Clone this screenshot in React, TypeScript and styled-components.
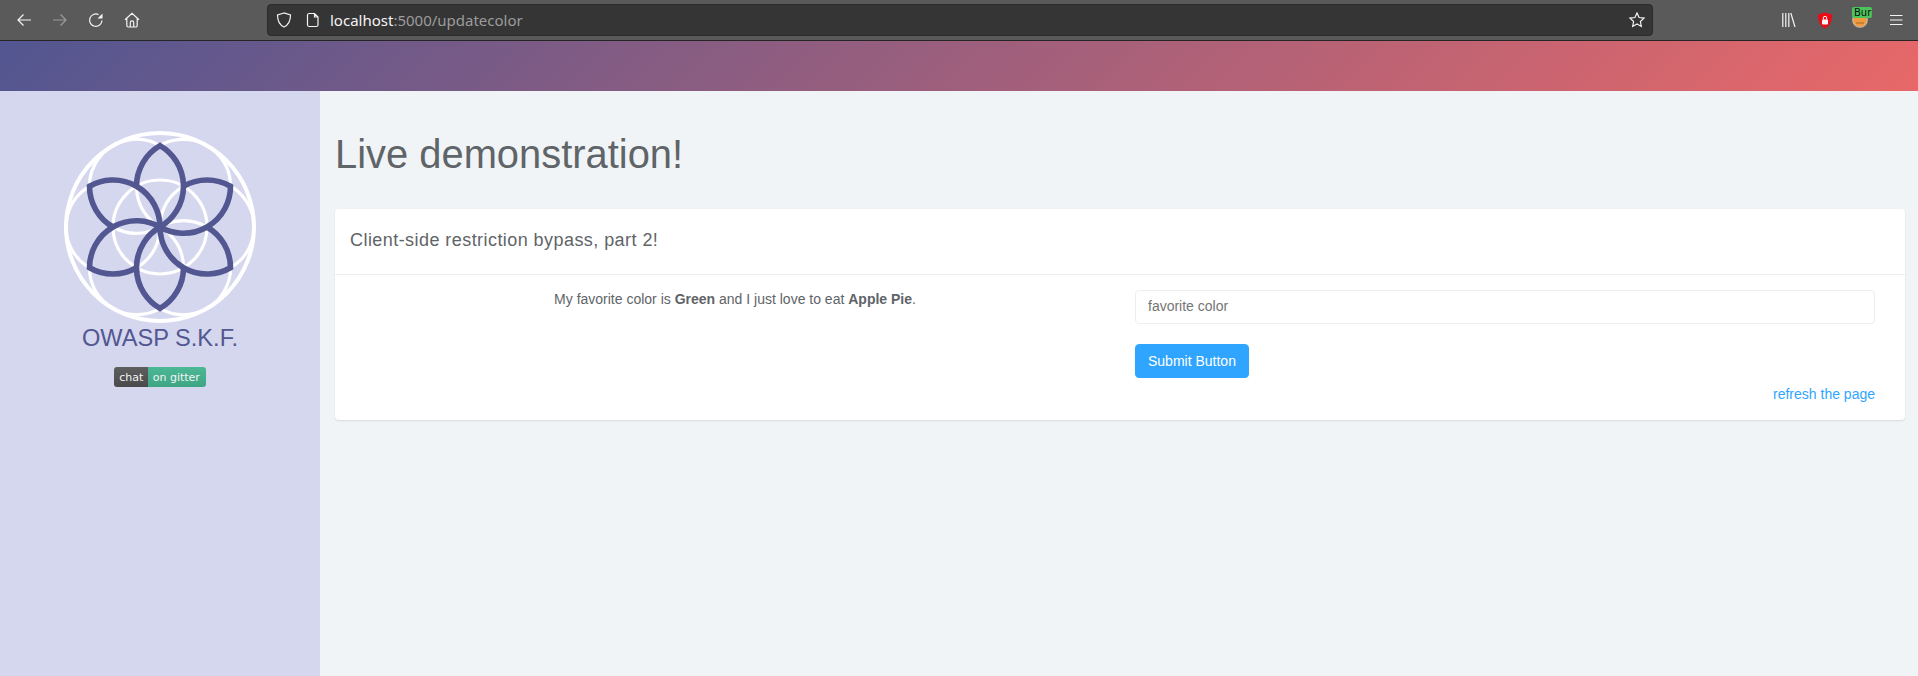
import React from "react";
import styled, { createGlobalStyle } from "styled-components";

const Global = createGlobalStyle`
  html, body { margin: 0; padding: 0; height: 100%; background: #f1f4f7; }
  body { font-family: "Liberation Sans", Arial, sans-serif; overflow: hidden; }
  #root { height: 100%; }
`;

const Page = styled.div`
  width: 1918px;
  height: 676px;
  display: flex;
  flex-direction: column;
  color: #5f6468;
`;

const Chrome = styled.div`
  height: 40px;
  flex: none;
  display: flex;
  align-items: center;
  background: #5a5a5a;
  border-bottom: 1px solid #252525;
`;

const NavGroup = styled.div`
  width: 267px;
  flex: none;
  display: flex;
  align-items: center;
  padding-left: 16px;
  gap: 20px;
  box-sizing: border-box;
`;

const NavIcon = styled.svg<{ $dim?: boolean }>`
  width: 16px;
  height: 16px;
  flex: none;
  fill: none;
  stroke: ${(p) => (p.$dim ? "#9a9a9a" : "#f4f4f4")};
  stroke-width: 1.2;
`;

const UrlBar = styled.div`
  width: 1386px;
  height: 32px;
  flex: none;
  box-sizing: border-box;
  background: #353535;
  border: 1px solid #2a2a2a;
  border-radius: 4px;
  display: flex;
  align-items: center;
  padding: 0 7px 0 8px;
`;

const UrlIcons = styled.div`
  display: flex;
  align-items: center;
  gap: 13px;
  margin-right: 9px;
`;

const UrlText = styled.span`
  font-family: "Noto Sans", sans-serif;
  font-size: 15px;
  color: #9c9c9c;
  flex: 1;
`;

const Host = styled.span`
  color: #f4f4f4;
`;

const ToolGroup = styled.div`
  flex: 1;
  display: flex;
  align-items: center;
  justify-content: flex-end;
  gap: 19px;
  padding-right: 14px;
`;

const BurpBox = styled.div`
  position: relative;
  width: 17px;
  height: 16px;
`;

const BurpBadge = styled.span`
  position: absolute;
  left: 0;
  top: -5px;
  width: 20px;
  height: 11px;
  background: #4cc45c;
  border-radius: 2px;
  color: #111;
  font-size: 10px;
  line-height: 11px;
  overflow: hidden;
  padding-left: 2px;
  box-sizing: border-box;
  font-family: "DejaVu Sans", sans-serif;
`;

const Banner = styled.div`
  height: 50px;
  flex: none;
  background: linear-gradient(135deg, #525691 0%, #e86868 100%);
`;

const Body = styled.div`
  flex: 1;
  display: flex;
  min-height: 0;
`;

const Sidebar = styled.aside`
  width: 320px;
  flex: none;
  background: #d5d7ee;
  display: flex;
  flex-direction: column;
  align-items: center;
  padding-top: 38px;
  box-sizing: border-box;
`;

const LogoTitle = styled.div`
  font-size: 23.6px;
  line-height: 28px;
  color: #525691;
  margin-top: -1px;
`;

const Gitter = styled.div`
  display: flex;
  height: 20px;
  margin-top: 15px;
  border-radius: 3px;
  overflow: hidden;
  font-family: "DejaVu Sans", sans-serif;
  font-size: 11px;
  line-height: 21px;
  color: #f4f4f4;
`;

const GitterLeft = styled.span`
  padding: 0 5px;
  background: linear-gradient(#5e5e5e, #4a4a4a);
`;

const GitterRight = styled.span`
  padding: 0 6px 0 4.5px;
  background: linear-gradient(#4cb895, #3fa585);
`;

const Main = styled.main`
  flex: 1;
  padding: 0 13px 0 15px;
  min-width: 0;
`;

const Title = styled.h1`
  margin: 40px 0 0;
  height: 78px;
  font-size: 39.9px;
  font-weight: 400;
  line-height: 47px;
`;

const Card = styled.section`
  background: #fff;
  border-radius: 4px;
  box-shadow: 0 1px 2px rgba(0, 0, 0, 0.1);
`;

const CardHead = styled.div`
  height: 62px;
  padding: 0 15px 3px;
  display: flex;
  align-items: center;
  font-size: 18px;
  letter-spacing: 0.44px;
  border-bottom: 1px solid #eceff1;
`;

const CardBody = styled.div`
  display: grid;
  grid-template-columns: 1fr 1fr;
  padding: 15px 15px 16px;
`;

const Statement = styled.p`
  margin: -1px 0 0;
  padding: 0 15px;
  font-size: 14px;
  line-height: 20px;
  text-align: center;
`;

const FormCol = styled.div`
  display: flex;
  flex-direction: column;
  align-items: flex-start;
  padding: 0 15px;
`;

const Field = styled.input`
  width: 100%;
  height: 34px;
  box-sizing: border-box;
  border: 1px solid #eceff1;
  border-radius: 4px;
  padding: 0 12px 2px;
  font-family: inherit;
  font-size: 14px;
  &::placeholder { color: #757575; opacity: 1; }
`;

const Submit = styled.button`
  margin-top: 20px;
  height: 34px;
  padding: 0 12px 1px;
  background: #30a5ff;
  color: #fff;
  border: 1px solid #30a5ff;
  border-radius: 4px;
  font-family: inherit;
  font-size: 14px;
`;

const RefreshLink = styled.a`
  align-self: flex-end;
  margin-top: 6px;
  font-size: 14px;
  line-height: 20px;
  color: #30a5ff;
  text-decoration: none;
`;

const R = 47;
const TIP = R * Math.sqrt(3);
const HX = R / 2;
const HY = (R * Math.sqrt(3)) / 2;
const angles = [0, 60, 120, 180, 240, 300];

const Logo = () => (
  <svg width="196" height="196" viewBox="-98 -98 196 196">
    <g fill="none" stroke="#fff" strokeWidth="3.2">
      <circle r="94" strokeWidth="4" />
      <circle r={R} />
      {angles.map((a) => (
        <circle key={a} cx={HX} cy={-HY} r={R} transform={`rotate(${a})`} />
      ))}
    </g>
    <g fill="none" stroke="#525691" strokeWidth="5.6" strokeLinejoin="miter">
      {angles.map((a) => (
        <path
          key={a}
          transform={`rotate(${a})`}
          d={`M${-HX} ${-HY} A${R} ${R} 0 0 1 0 ${-TIP} A${R} ${R} 0 0 1 0 0`}
        />
      ))}
    </g>
  </svg>
);

export default function App() {
  return (
    <Page>
      <Global />
      <Chrome>
        <NavGroup>
          <NavIcon viewBox="0 0 16 16"><path d="M15 8H2M7.500 2.500 2 8l5.500 5.500" /></NavIcon>
          <NavIcon viewBox="0 0 16 16" $dim><path d="M1 8h13M8.500 2.500 14 8l-5.500 5.500" /></NavIcon>
          <NavIcon viewBox="0 0 16 16">
            <path d="M14 8.500A6.200 6.200 0 1 1 10.500 2.600" />
            <path d="M14.500 1.500v5h-5z" fill="#f4f4f4" stroke="none" />
          </NavIcon>
          <NavIcon viewBox="0 0 16 16">
            <path d="M1 7.800 8 1.200l7 6.600M2.800 6.500v7a1.500 1.500 0 0 0 1.500 1.500h7.400a1.500 1.500 0 0 0 1.500-1.500v-7M6.300 15v-4.500a1.700 1.700 0 0 1 3.400 0V15" />
          </NavIcon>
        </NavGroup>
        <UrlBar>
          <UrlIcons>
            <NavIcon viewBox="0 0 16 16"><path d="M8 1 1.500 3c0 6.500 1.800 9.800 6.500 12 4.700-2.200 6.500-5.500 6.500-12z" /></NavIcon>
            <NavIcon viewBox="0 0 16 16"><path d="M4.200 1.500H9.500l3.500 3.500v8a1.700 1.700 0 0 1-1.700 1.500H4.200A1.700 1.700 0 0 1 2.500 13V3a1.700 1.700 0 0 1 1.700-1.500zM9.500 1.500V5H13" /></NavIcon>
          </UrlIcons>
          <UrlText><Host>localhost</Host>:5000/updatecolor</UrlText>
          <NavIcon viewBox="0 0 16 16"><path d="m8 1 2.100 4.500 4.900.6-3.600 3.400.9 4.900L8 12l-4.300 2.400.9-4.900L1 6.100l4.900-.6z" /></NavIcon>
        </UrlBar>
        <ToolGroup>
          <NavIcon viewBox="0 0 16 16"><path d="M.8 1v14M3.800 1v14M6.800 1v14M8.800 1l4.200 14" /></NavIcon>
          <svg width="16" height="17" viewBox="0 0 16 17">
            <path d="M8 .5 15 2.500c0 7-2 11.500-7 14-5-2.500-7-7-7-14z" fill="#ea0b14" />
            <rect x="5" y="7.500" width="6" height="5" rx="1" fill="#fff" />
            <path d="M6.300 7.500V6a1.700 1.700 0 0 1 3.400 0v1.500" fill="none" stroke="#fff" strokeWidth="1" />
          </svg>
          <BurpBox>
            <svg width="16" height="16" viewBox="0 0 16 16">
              <circle cx="8" cy="8" r="7.200" fill="#f09a3e" stroke="#cdb8a0" strokeWidth="1.300" />
              <path d="M4 11h8" stroke="#a8672a" strokeWidth="1" />
            </svg>
            <BurpBadge>Burp</BurpBadge>
          </BurpBox>
          <NavIcon viewBox="0 0 16 16"><path d="M2 3.500h12.500M2 8h12.500M2 12.500h12.500" /></NavIcon>
        </ToolGroup>
      </Chrome>
      <Banner />
      <Body>
        <Sidebar>
          <Logo />
          <LogoTitle>OWASP S.K.F.</LogoTitle>
          <Gitter>
            <GitterLeft>chat</GitterLeft>
            <GitterRight>on gitter</GitterRight>
          </Gitter>
        </Sidebar>
        <Main>
          <Title>Live demonstration!</Title>
          <Card>
            <CardHead>Client-side restriction bypass, part 2!</CardHead>
            <CardBody>
              <Statement>
                My favorite color is <b>Green</b> and I just love to eat <b>Apple Pie</b>.
              </Statement>
              <FormCol>
                <Field placeholder="favorite color" />
                <Submit>Submit Button</Submit>
                <RefreshLink href="#">refresh the page</RefreshLink>
              </FormCol>
            </CardBody>
          </Card>
        </Main>
      </Body>
    </Page>
  );
}
